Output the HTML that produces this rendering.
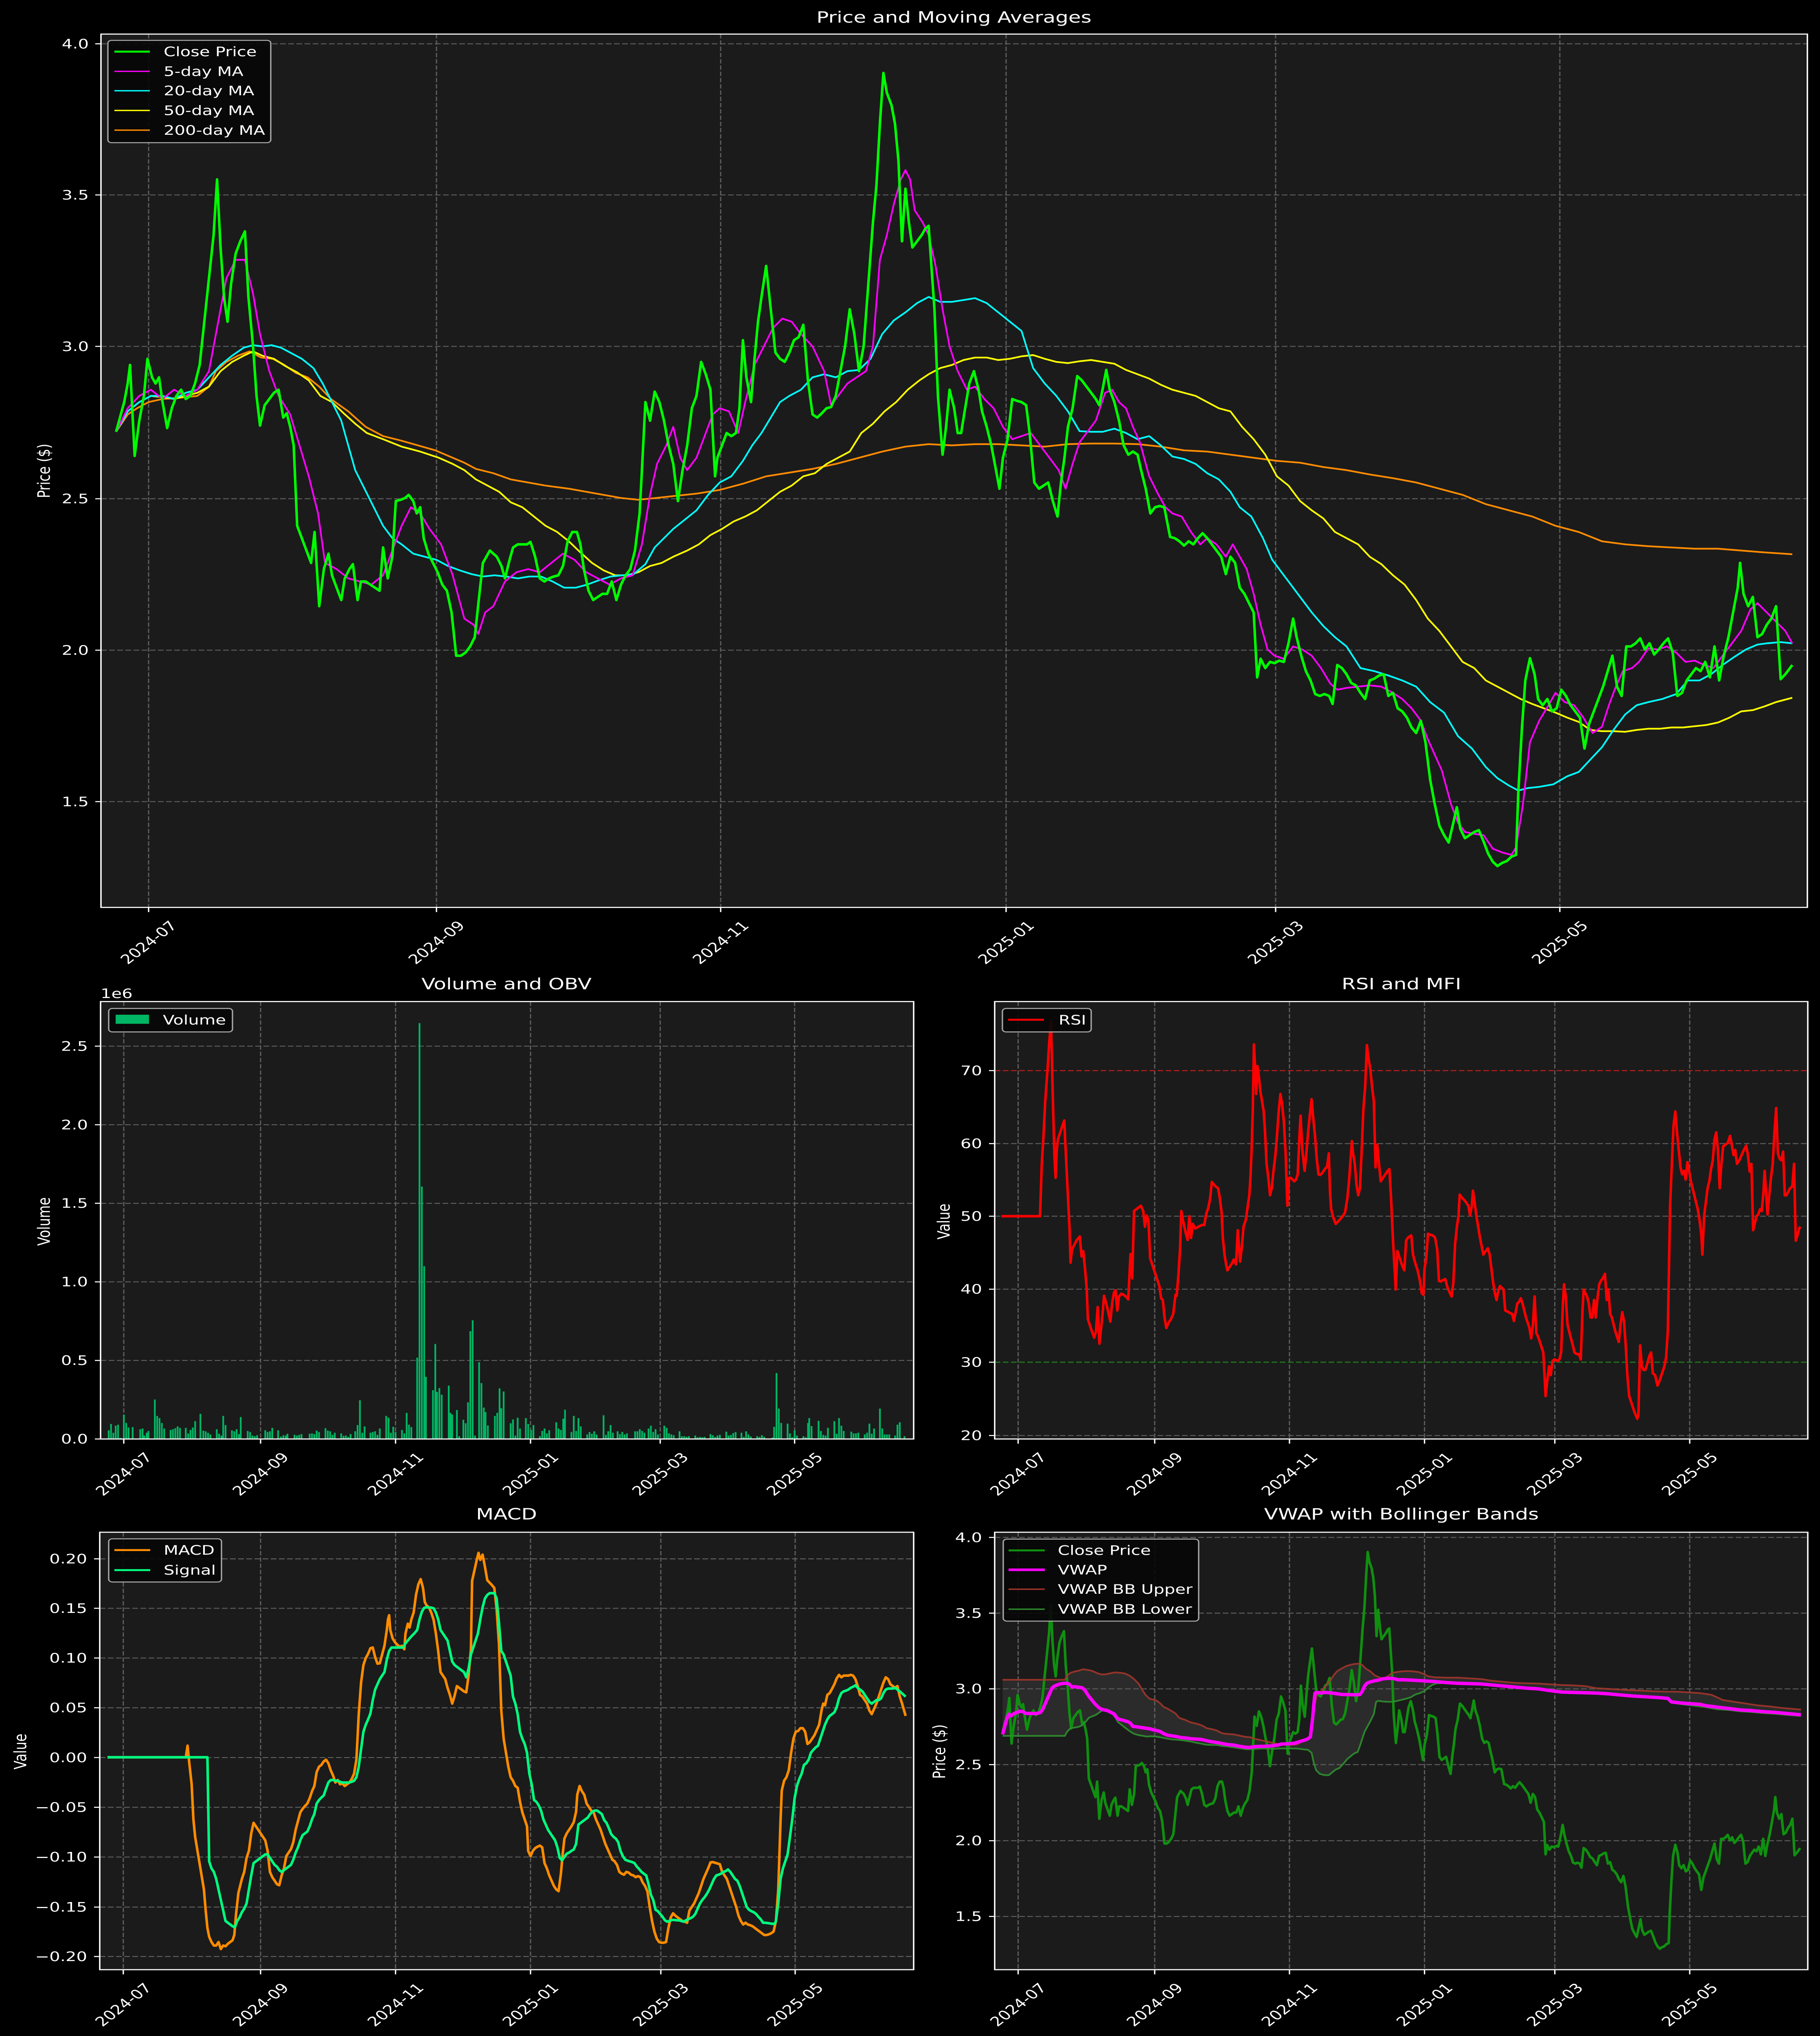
<!DOCTYPE html>
<html><head><meta charset="utf-8"><style>
html,body{margin:0;padding:0;background:#000;width:100%;height:100%;overflow:hidden}
svg{display:block;position:absolute;left:0;top:0;width:100vw;height:100vh}
.ns{vector-effect:non-scaling-stroke;fill:none;stroke-linejoin:round}
text{font-family:"DejaVu Sans","Liberation Sans",sans-serif;fill:#fff}
.t{font-size:41.7px}
.ti{font-size:50px;text-anchor:middle}
.yl{text-anchor:end;dominant-baseline:central}
.xl{text-anchor:middle;dominant-baseline:central}
.g{stroke:#5e5e5e;stroke-width:3;stroke-dasharray:14 6;fill:none}
.tk{stroke:#fff;stroke-width:3.3}
.sp{fill:none;stroke:#fff;stroke-width:3.5}
.lg{fill:#070707;fill-opacity:.9;stroke:#a8a8a8;stroke-width:3.3}
</style></head><body>
<svg xmlns="http://www.w3.org/2000/svg" xmlns:xlink="http://www.w3.org/1999/xlink" viewBox="0 0 4470 6507" preserveAspectRatio="none" overflow="hidden">
<defs>
<clipPath id="c1"><rect x="248" y="109" width="4191" height="2791"/></clipPath>
<clipPath id="c2"><rect x="247" y="3201" width="1997" height="1398"/></clipPath>
<clipPath id="c3"><rect x="2443" y="3201" width="1997" height="1398"/></clipPath>
<clipPath id="c4"><rect x="245" y="4897" width="1999" height="1398"/></clipPath>
<clipPath id="c5"><rect x="2443" y="4897" width="1997" height="1398"/></clipPath>
<polyline id="cp" class="ns" points="100,698 107,650 110,620 112,590 116,737 120,680 124,640 127,580 131,610 134,620 137,610 140,650 144,692 148,660 152,640 156,630 160,645 164,640 168,620 172,590 176,520 180,450 184,380 187,290 190,400 193,480 196,520 199,460 203,410 207,390 211,374 214,480 218,560 221,640 224,688 228,655 232,645 236,635 240,630 244,675 247,668 250,690 253,720 256,850 260,870 264,890 268,910 271,860 275,980 279,920 283,895 286,930 290,950 294,970 297,935 301,920 304,912 308,970 311,940 315,940 319,945 323,950 327,955 330,885 334,935 338,900 341,810 345,808 349,805 352,800 356,810 359,830 362,820 365,870 369,895 373,910 377,925 381,945 385,955 389,990 393,1060 397,1060 401,1055 405,1045 409,1030 413,960 416,910 419,900 422,890 425,895 428,900 432,915 435,935 439,905 442,885 446,880 450,880 454,880 457,876 461,900 465,935 469,940 473,935 477,932 481,930 485,915 489,875 493,860 497,860 500,880 503,920 507,955 511,970 515,965 519,960 523,960 527,940 531,970 535,945 539,930 543,920 547,890 551,830 553,760 556,650 560,680 564,633 568,650 572,680 576,720 580,750 584,810 588,760 592,720 596,660 600,640 604,585 608,605 612,630 614,700 616,770 618,740 622,720 626,700 630,705 634,700 637,660 640,550 643,610 647,650 650,580 653,520 656,480 660,430 664,500 668,570 672,580 676,585 680,570 684,550 688,545 692,525 696,615 700,670 704,675 708,668 712,660 716,658 720,640 724,600 728,560 732,500 736,540 740,600 744,560 748,460 752,360 755,300 758,200 761,118 764,150 768,170 771,200 774,260 777,390 780,305 783,360 786,400 790,390 794,380 797,370 800,365 802,420 805,500 808,640 812,735 815,690 818,630 822,660 825,700 828,700 831,665 835,620 839,600 843,630 846,665 850,690 854,720 858,760 861,790 864,740 868,710 872,645 876,648 880,650 884,655 887,700 891,780 895,790 899,785 903,780 907,810 911,835 914,780 917,740 920,690 924,660 928,608 932,615 936,625 940,635 944,645 947,655 950,628 953,598 956,630 960,650 964,680 968,720 972,735 976,730 980,735 983,760 987,790 991,830 995,820 999,818 1003,820 1008,868 1012,870 1016,875 1020,882 1024,875 1028,880 1032,870 1036,862 1040,870 1044,880 1048,890 1052,900 1056,928 1060,900 1064,910 1068,950 1072,960 1076,975 1080,990 1083,1095 1086,1065 1090,1080 1094,1070 1098,1072 1102,1068 1106,1070 1110,1040 1114,1000 1117,1030 1121,1060 1125,1085 1129,1100 1133,1122 1137,1125 1141,1122 1145,1125 1148,1138 1152,1075 1156,1080 1160,1090 1164,1104 1168,1108 1172,1120 1176,1130 1180,1100 1184,1097 1188,1092 1192,1090 1196,1125 1200,1120 1204,1145 1208,1150 1212,1160 1216,1176 1220,1185 1224,1165 1228,1200 1232,1260 1236,1300 1240,1335 1244,1350 1248,1362 1252,1330 1255,1305 1258,1340 1262,1355 1266,1350 1270,1345 1274,1342 1278,1360 1282,1380 1286,1393 1290,1400 1294,1395 1298,1392 1302,1385 1306,1382 1308,1280 1311,1180 1314,1100 1318,1064 1322,1090 1325,1130 1329,1140 1333,1130 1337,1150 1341,1145 1345,1115 1349,1125 1353,1140 1357,1150 1361,1160 1365,1210 1369,1170 1373,1150 1377,1130 1381,1110 1385,1085 1389,1060 1393,1110 1397,1125 1401,1045 1405,1045 1409,1040 1413,1032 1417,1050 1421,1040 1425,1058 1429,1050 1433,1040 1437,1032 1441,1055 1445,1125 1449,1120 1453,1100 1457,1090 1461,1080 1465,1085 1469,1070 1473,1095 1477,1045 1481,1100 1485,1060 1489,1030 1493,990 1497,950 1499,910 1502,960 1506,980 1510,965 1514,1030 1518,1025 1522,1010 1526,1000 1530,980 1534,1098 1538,1090 1544,1075"/>
</defs>
<rect width="4470" height="6507" fill="#000"/>

<!-- ================= TOP PANEL ================= -->
<rect x="248" y="109" width="4191" height="2791" fill="#1b1b1b"/>
<g class="g">
<path d="M365 109V2900M1072 109V2900M1770 109V2900M2471 109V2900M3133 109V2900M3831 109V2900"/>
<path d="M248 140H4439M248 623H4439M248 1107H4439M248 1594H4439M248 2078H4439M248 2562H4439"/>
</g>
<g clip-path="url(#c1)">
<g transform="scale(2.851,1.977)">
<polyline class="ns" stroke="#ff8c00" stroke-width="4.2" points="100,698 110,670 118,660 128,650 140,645 155,643 170,640 180,625 186,600 195,585 205,575 215,568 225,578 235,580 245,590 255,603 265,610 275,625 285,645 300,665 315,690 330,705 345,712 360,720 375,728 390,740 400,748 410,758 425,765 440,775 455,780 470,785 490,790 505,795 520,800 535,805 550,808 565,805 580,802 600,798 620,792 640,782 660,770 680,764 700,758 720,750 740,740 760,730 780,722 800,718 820,720 840,718 860,718 880,720 900,722 920,718 940,717 960,717 980,718 1000,722 1020,728 1040,730 1060,735 1080,740 1100,745 1120,748 1140,755 1160,760 1180,767 1200,773 1220,780 1240,790 1260,800 1280,815 1300,825 1320,835 1340,850 1360,860 1380,875 1400,880 1420,883 1440,885 1460,887 1480,887 1500,890 1520,893 1544,896"/>
<polyline class="ns" stroke="#ffff00" stroke-width="4.2" points="100,698 110,665 120,650 130,640 140,642 150,645 160,640 170,635 180,625 190,600 200,585 210,575 218,568 226,575 236,580 246,592 256,602 266,615 276,640 286,650 296,668 306,685 316,700 330,710 346,722 362,730 378,740 390,750 400,760 410,775 420,785 430,795 440,812 450,820 460,835 470,850 480,860 490,875 500,893 510,910 520,922 530,930 540,930 550,925 560,915 570,910 580,900 592,890 602,880 612,865 622,855 632,843 642,835 652,825 662,810 672,795 682,785 692,770 702,765 712,750 722,740 732,730 742,700 752,685 762,665 772,650 782,630 792,615 800,605 810,595 820,590 830,582 840,578 850,578 860,582 870,580 880,576 890,574 900,580 910,585 920,587 930,584 940,582 950,585 960,588 970,598 980,605 990,612 1000,622 1010,630 1020,635 1030,640 1040,650 1050,660 1060,665 1070,690 1080,710 1090,735 1100,770 1110,785 1120,810 1130,825 1140,838 1150,860 1160,870 1170,880 1180,900 1190,912 1200,930 1210,945 1220,970 1230,1000 1240,1020 1250,1045 1260,1070 1270,1080 1280,1100 1290,1110 1300,1120 1310,1130 1320,1138 1330,1145 1340,1152 1350,1160 1360,1167 1370,1180 1380,1182 1390,1182 1400,1183 1410,1180 1420,1178 1430,1178 1440,1176 1450,1176 1460,1174 1470,1172 1480,1168 1490,1160 1500,1150 1510,1148 1520,1142 1530,1135 1544,1128"/>
<polyline class="ns" stroke="#00ffff" stroke-width="4.2" points="100,698 110,665 120,650 130,640 140,640 150,645 160,635 170,630 180,610 190,590 200,575 210,562 218,558 226,560 234,558 242,562 250,570 260,580 270,595 278,620 286,650 294,680 300,720 306,760 314,790 322,820 330,850 338,870 346,880 356,895 366,900 376,905 386,915 396,922 406,928 416,932 426,930 436,932 446,935 456,932 466,932 476,940 486,950 496,950 506,945 516,938 526,932 536,930 546,928 556,912 564,885 572,870 580,855 590,840 600,825 610,800 620,780 630,770 640,745 648,720 656,700 664,675 672,650 680,640 690,630 700,610 710,605 720,610 730,600 740,598 750,580 760,540 770,518 780,505 790,490 800,480 810,488 820,488 830,485 840,482 850,490 860,505 870,520 880,535 890,595 900,620 910,640 920,665 930,697 940,698 950,698 960,693 970,700 980,710 990,705 1000,720 1010,738 1020,742 1030,750 1040,765 1050,775 1060,795 1068,820 1078,835 1088,870 1096,905 1104,925 1114,950 1122,970 1130,990 1140,1012 1150,1030 1160,1045 1172,1080 1184,1085 1196,1092 1208,1100 1220,1110 1232,1135 1244,1152 1256,1190 1268,1210 1280,1240 1290,1258 1300,1270 1308,1278 1316,1274 1326,1272 1338,1268 1350,1255 1360,1248 1370,1228 1380,1208 1390,1180 1400,1155 1410,1140 1420,1135 1432,1130 1444,1122 1454,1100 1464,1100 1474,1090 1484,1075 1494,1062 1504,1050 1514,1042 1522,1040 1534,1038 1544,1040"/>
<polyline class="ns" stroke="#ff00ff" stroke-width="4.2" points="100,698 110,660 120,640 130,630 140,645 150,630 160,640 170,630 180,600 188,520 195,450 203,420 211,420 218,475 224,540 232,600 240,640 250,670 258,720 266,770 274,830 280,910 290,920 300,935 310,940 320,945 330,930 338,890 346,850 354,820 362,830 370,855 380,880 390,930 400,1000 408,1010 412,1025 418,990 425,980 435,940 445,925 455,920 465,925 475,910 485,895 495,905 505,925 515,935 525,945 535,935 545,930 553,880 560,800 566,750 574,720 580,690 586,740 592,760 600,740 608,700 614,670 620,660 628,665 636,700 642,650 650,590 658,560 666,530 674,515 682,520 690,540 700,560 710,600 716,655 722,640 730,620 738,610 746,600 752,560 758,420 764,380 770,330 776,290 780,275 784,290 788,340 795,360 800,380 806,430 812,500 818,560 825,600 833,630 840,625 848,645 856,660 864,690 872,710 880,705 888,700 896,720 904,740 912,760 918,790 924,750 930,715 936,700 944,680 952,635 958,630 964,650 970,660 976,690 982,715 990,770 998,800 1004,820 1010,830 1018,835 1026,860 1034,880 1040,870 1048,880 1056,900 1062,880 1068,900 1074,920 1080,960 1086,1010 1092,1050 1098,1060 1106,1065 1114,1045 1122,1050 1130,1060 1138,1080 1146,1105 1152,1115 1160,1112 1170,1110 1180,1108 1190,1110 1200,1120 1208,1130 1216,1145 1224,1165 1230,1195 1236,1220 1242,1245 1250,1300 1256,1330 1262,1345 1270,1348 1278,1350 1286,1372 1294,1378 1302,1382 1306,1370 1312,1300 1318,1200 1326,1165 1334,1140 1340,1120 1348,1135 1356,1140 1364,1160 1372,1185 1380,1175 1386,1140 1392,1110 1398,1085 1406,1080 1412,1070 1420,1048 1428,1050 1436,1045 1444,1055 1452,1070 1460,1068 1468,1075 1476,1080 1484,1060 1492,1040 1500,1020 1508,985 1514,975 1522,990 1530,1005 1538,1020 1544,1040"/>
</g>
<use xlink:href="#cp" href="#cp" transform="scale(2.851,1.977)" stroke="#00ff00" stroke-width="6.25"/>
</g>
<rect class="sp" x="248" y="109" width="4191" height="2791"/>
<path class="tk" d="M234 140H248M234 623H248M234 1107H248M234 1594H248M234 2078H248M234 2562H248M365 2900v15M1072 2900v15M1770 2900v15M2471 2900v15M3133 2900v15M3831 2900v15"/>
<g class="t yl"><text x="218" y="140">4.0</text><text x="218" y="623">3.5</text><text x="218" y="1107">3.0</text><text x="218" y="1594">2.5</text><text x="218" y="2078">2.0</text><text x="218" y="2562">1.5</text></g>
<g class="t xl">
<text transform="translate(365,3012) rotate(-45)">2024-07</text>
<text transform="translate(1072,3012) rotate(-45)">2024-09</text>
<text transform="translate(1770,3012) rotate(-45)">2024-11</text>
<text transform="translate(2471,3012) rotate(-45)">2025-01</text>
<text transform="translate(3133,3012) rotate(-45)">2025-03</text>
<text transform="translate(3831,3012) rotate(-45)">2025-05</text>
</g>
<text class="t" text-anchor="middle" dominant-baseline="central" transform="translate(108,1505) rotate(-90)">Price ($)</text>
<text class="ti" x="2343" y="72">Price and Moving Averages</text>
<rect class="lg" x="265" y="129" width="400" height="327" rx="9"/>
<path d="M281 165H368" stroke="#00ff00" stroke-width="6.25"/>
<path d="M281 228H368" stroke="#ff00ff" stroke-width="4.2"/>
<path d="M281 290H368" stroke="#00ffff" stroke-width="4.2"/>
<path d="M281 353H368" stroke="#ffff00" stroke-width="4.2"/>
<path d="M281 416H368" stroke="#ff8c00" stroke-width="4.2"/>
<g class="t" dominant-baseline="central"><text x="402" y="165">Close Price</text><text x="402" y="228">5-day MA</text><text x="402" y="290">20-day MA</text><text x="402" y="353">50-day MA</text><text x="402" y="416">200-day MA</text></g>

<!-- ================= VOLUME ================= -->
<rect x="247" y="3201" width="1997" height="1398" fill="#1b1b1b"/>
<g class="g">
<path d="M304 3201V4599M640 3201V4599M971.5 3201V4599M1303 3201V4599M1621.5 3201V4599M1951.6 3201V4599"/>
<path d="M247 3343.5H2244M247 3594.6H2244M247 3845.7H2244M247 4096.8H2244M247 4348H2244"/>
</g>
<g clip-path="url(#c2)"><g transform="translate(0,3050) scale(1.435,1.116)">
<path stroke="#00b563" stroke-width="3" fill="none" d="M186 1388V1363M190 1388V1345M194 1388V1370M198 1388V1350M202 1388V1347M206 1388V1385M212 1388V1318M216 1388V1342M220 1388V1355M227 1388V1354M240 1388V1360M244 1388V1358M247 1388V1378M251 1388V1370M254 1388V1365M265 1388V1275M269 1388V1322M273 1388V1328M277 1388V1342M281 1388V1358M292 1388V1362M296 1388V1360M300 1388V1357M304 1388V1352M308 1388V1356M318 1388V1356M322 1388V1372M326 1388V1362M330 1388V1355M334 1388V1337M343 1388V1316M348 1388V1364M352 1388V1366M356 1388V1370M360 1388V1375M371 1388V1360M375 1388V1373M379 1388V1378M382 1388V1322M386 1388V1348M397 1388V1363M401 1388V1366M405 1388V1360M409 1388V1374M412 1388V1325M424 1388V1365M428 1388V1368M432 1388V1378M436 1388V1380M440 1388V1377M454 1388V1363M458 1388V1368M462 1388V1366M466 1388V1356M476 1388V1363M481 1388V1381M485 1388V1377M489 1388V1378M492 1388V1373M504 1388V1376M508 1388V1378M512 1388V1376M516 1388V1374M530 1388V1373M534 1388V1372M538 1388V1374M542 1388V1364M546 1388V1368M557 1388V1357M561 1388V1364M565 1388V1366M569 1388V1376M573 1388V1370M584 1388V1372M588 1388V1379M592 1388V1378M596 1388V1382M600 1388V1374M608 1388V1366M612 1388V1348M616 1388V1277M620 1388V1370M624 1388V1352M634 1388V1370M638 1388V1368M642 1388V1366M646 1388V1376M650 1388V1358M661 1388V1322M665 1388V1327M669 1388V1370M673 1388V1353M677 1388V1368M688 1388V1362M692 1388V1372M696 1388V1313M700 1388V1347M704 1388V1354M714 1388V1155M718 1388V197M722 1388V665M726 1388V893M729 1388V1210M741 1388V1248M745 1388V1116M748 1388V1253M752 1388V1242M756 1388V1261M768 1388V1235M771 1388V1313M774 1388V1318M782 1388V1305M786 1388V1380M793 1388V1333M797 1388V1343M801 1388V1283M805 1388V1079M809 1388V1048M813 1388V1378M820 1388V1168M824 1388V1228M828 1388V1298M831 1388V1311M835 1388V1349M847 1388V1322M851 1388V1313M855 1388V1243M858 1388V1300M862 1388V1252M874 1388V1343M878 1388V1332M882 1388V1378M886 1388V1327M890 1388V1358M900 1388V1328M904 1388V1345M909 1388V1362M913 1388V1348M924 1388V1380M928 1388V1365M932 1388V1358M936 1388V1372M940 1388V1363M952 1388V1340M956 1388V1358M960 1388V1362M964 1388V1330M967 1388V1304M978 1388V1368M982 1388V1322M986 1388V1365M990 1388V1328M994 1388V1352M1005 1388V1375M1009 1388V1368M1013 1388V1373M1017 1388V1366M1021 1388V1375M1033 1388V1320M1037 1388V1376M1041 1388V1366M1045 1388V1348M1049 1388V1370M1057 1388V1366M1061 1388V1374M1065 1388V1368M1069 1388V1375M1073 1388V1372M1087 1388V1366M1091 1388V1366M1095 1388V1360M1099 1388V1365M1103 1388V1370M1110 1388V1358M1114 1388V1350M1118 1388V1368M1122 1388V1360M1126 1388V1375M1137 1388V1350M1141 1388V1356M1145 1388V1372M1149 1388V1375M1153 1388V1377M1163 1388V1366M1167 1388V1380M1171 1388V1380M1175 1388V1382M1179 1388V1380M1190 1388V1378M1194 1388V1383M1198 1388V1382M1202 1388V1383M1206 1388V1382M1216 1388V1374M1220 1388V1377M1224 1388V1382M1228 1388V1378M1232 1388V1376M1243 1388V1367M1247 1388V1378M1251 1388V1376M1255 1388V1371M1259 1388V1368M1269 1388V1370M1273 1388V1382M1277 1388V1366M1281 1388V1375M1285 1388V1381M1296 1388V1380M1300 1388V1382M1304 1388V1377M1308 1388V1382M1322 1388V1384M1325 1388V1353M1329 1388V1199M1333 1388V1301M1337 1388V1342M1348 1388V1344M1352 1388V1372M1356 1388V1383M1360 1388V1363M1364 1388V1378M1375 1388V1380M1379 1388V1383M1383 1388V1342M1385 1388V1328M1389 1388V1351M1401 1388V1336M1405 1388V1365M1409 1388V1376M1413 1388V1378M1417 1388V1356M1428 1388V1337M1432 1388V1373M1436 1388V1328M1440 1388V1350M1444 1388V1365M1457 1388V1367M1461 1388V1372M1465 1388V1372M1469 1388V1370M1480 1388V1375M1484 1388V1370M1488 1388V1344M1492 1388V1373M1496 1388V1358M1506 1388V1301M1510 1388V1358M1514 1388V1375M1518 1388V1375M1522 1388V1375M1532 1388V1378M1536 1388V1347M1540 1388V1340M1548 1388V1380"/>
</g></g>
<rect class="sp" x="247" y="3201" width="1997" height="1398"/>
<path class="tk" d="M233 3343.5H247M233 3594.6H247M233 3845.7H247M233 4096.8H247M233 4348H247M233 4599H247M304 4599v15M640 4599v15M971.5 4599v15M1303 4599v15M1621.5 4599v15M1951.6 4599v15"/>
<g class="t yl"><text x="216" y="3343.5">2.5</text><text x="216" y="3594.6">2.0</text><text x="216" y="3845.7">1.5</text><text x="216" y="4096.8">1.0</text><text x="216" y="4348">0.5</text><text x="216" y="4599">0.0</text></g>
<g class="t xl">
<text transform="translate(304,4711) rotate(-45)">2024-07</text>
<text transform="translate(640,4711) rotate(-45)">2024-09</text>
<text transform="translate(971.5,4711) rotate(-45)">2024-11</text>
<text transform="translate(1303,4711) rotate(-45)">2025-01</text>
<text transform="translate(1621.5,4711) rotate(-45)">2025-03</text>
<text transform="translate(1951.6,4711) rotate(-45)">2025-05</text>
</g>
<text class="t" x="247" y="3190">1e6</text>
<text class="t" text-anchor="middle" dominant-baseline="central" transform="translate(108,3904) rotate(-90)">Volume</text>
<text class="ti" x="1244" y="3162">Volume and OBV</text>
<rect class="lg" x="267" y="3223" width="304" height="75" rx="9"/>
<rect x="284" y="3243" width="82" height="29" fill="#00b563"/>
<text class="t" x="400" y="3260" dominant-baseline="central">Volume</text>

<!-- ================= RSI ================= -->
<rect x="2443" y="3201" width="1997" height="1398" fill="#1b1b1b"/>
<g class="g">
<path d="M2500.6 3201V4599M2836 3201V4599M3167 3201V4599M3498.7 3201V4599M3818.7 3201V4599M4150 3201V4599"/>
<path d="M2443 3421.6H4440M2443 3654.9H4440M2443 3887H4440M2443 4120.2H4440M2443 4353.5H4440M2443 4587.8H4440"/>
</g>
<path d="M2443 3421.6H4440" stroke="#b01e1e" stroke-width="3.5" stroke-dasharray="14 6"/>
<path d="M2443 4353.5H4440" stroke="#1e7a1e" stroke-width="3.5" stroke-dasharray="14 6"/>
<g clip-path="url(#c3)"><g transform="translate(2250,3050) scale(1.4158,1.116)">
<polyline class="ns" stroke="#ff0000" stroke-width="6.25" points="148,750 215,750 218,600 221,520 224,420 228,330 231,250 234,192 237,400 240,580 242,640 244,560 246,530 250,510 254,490 257,476 260,580 263,680 266,780 268,883 270,850 272,840 278,820 284,808 287,865 290,850 293,900 296,960 298,1045 302,1065 305,1080 309,1098 312,1080 315,1010 318,1115 321,1070 324,1020 326,978 330,1000 334,1030 337,1052 340,1000 343,970 346,962 349,1020 352,980 356,972 360,975 364,980 368,988 372,858 375,928 378,735 382,730 386,725 390,720 394,735 397,780 400,748 403,760 406,870 410,890 414,910 418,930 422,950 425,985 428,990 431,1040 434,1070 438,1055 442,1045 446,1030 450,975 452,978 455,920 458,840 460,735 464,770 468,800 471,818 474,750 477,812 480,772 484,785 488,782 492,778 496,775 500,775 503,745 507,725 510,700 513,652 517,660 520,665 524,670 527,700 530,740 532,810 535,860 538,890 540,905 544,895 548,885 551,874 555,888 558,790 562,880 565,840 568,780 572,760 575,725 578,690 580,640 582,560 584,450 586,258 588,320 590,400 592,320 594,340 597,390 600,420 603,450 605,500 608,600 611,640 614,690 617,670 620,620 623,580 626,520 629,450 632,400 635,430 638,480 641,570 644,720 647,640 650,640 653,645 656,650 659,645 662,630 665,520 667,462 670,560 674,620 677,570 680,510 683,460 686,415 689,470 692,520 695,585 698,630 701,632 705,625 709,615 713,608 716,570 718,680 720,730 724,755 728,772 732,765 736,758 740,750 744,740 748,700 751,650 754,580 756,535 758,570 761,600 764,660 767,690 770,670 773,560 776,440 779,380 782,260 785,300 788,330 791,380 794,420 797,610 800,545 803,600 806,650 810,640 814,630 818,620 821,615 824,700 827,810 830,900 832,960 835,850 838,865 841,880 844,895 847,905 850,820 853,812 856,808 859,805 862,860 866,885 870,905 874,935 877,970 880,975 882,900 885,870 888,800 892,803 896,805 900,810 904,845 907,935 910,937 914,933 918,930 922,955 926,970 929,980 932,940 935,830 938,782 941,748 943,688 946,695 950,702 954,710 958,720 961,748 964,720 966,677 969,710 972,750 975,780 978,810 981,835 984,860 988,850 992,842 995,860 998,900 1001,940 1004,970 1007,990 1010,962 1013,950 1016,955 1019,960 1022,1020 1026,1023 1030,1027 1034,1030 1037,1050 1040,1025 1043,1000 1046,995 1049,985 1052,1000 1055,1020 1058,1040 1061,1055 1064,1070 1067,1100 1070,1060 1073,980 1076,1085 1079,1095 1082,1110 1085,1125 1088,1140 1090,1200 1092,1265 1095,1220 1098,1180 1101,1205 1104,1165 1107,1160 1110,1162 1113,1165 1116,1160 1119,1140 1122,1000 1124,945 1127,980 1130,1060 1133,1080 1136,1100 1139,1118 1142,1140 1146,1145 1150,1145 1153,1160 1156,1020 1158,960 1161,970 1164,980 1167,1000 1170,1040 1173,1040 1176,990 1179,1040 1182,985 1185,945 1188,935 1192,925 1195,915 1198,990 1201,960 1204,1030 1207,1040 1210,1060 1213,1080 1216,1095 1219,1110 1222,1060 1225,1025 1228,1050 1231,1120 1234,1210 1237,1265 1240,1280 1243,1295 1246,1310 1249,1322 1251,1330 1253,1320 1256,1120 1259,1180 1262,1190 1265,1190 1268,1175 1272,1150 1275,1140 1278,1200 1282,1205 1286,1235 1290,1220 1294,1200 1298,1180 1301,1155 1304,1080 1306,900 1308,720 1311,600 1314,490 1317,450 1320,510 1323,560 1326,610 1329,630 1332,620 1335,645 1338,595 1341,620 1344,650 1347,670 1350,690 1353,710 1356,730 1359,760 1362,800 1364,860 1367,750 1370,710 1373,670 1376,650 1379,615 1382,590 1385,530 1388,510 1391,560 1394,670 1397,600 1400,550 1404,545 1408,540 1412,520 1415,545 1418,575 1421,560 1424,600 1428,590 1432,575 1436,560 1440,548 1443,575 1446,622 1449,600 1452,790 1455,770 1458,750 1461,745 1464,730 1467,735 1470,680 1472,620 1474,670 1477,745 1480,690 1483,640 1486,600 1489,510 1492,440 1495,570 1498,585 1501,590 1504,565 1507,690 1510,690 1513,680 1516,670 1520,665 1523,600 1526,820 1529,805 1532,785 1534,780"/>
</g></g>
<rect class="sp" x="2443" y="3201" width="1997" height="1398"/>
<path class="tk" d="M2429 3421.6H2443M2429 3654.9H2443M2429 3887H2443M2429 4120.2H2443M2429 4353.5H2443M2429 4587.8H2443M2500.6 4599v15M2836 4599v15M3167 4599v15M3498.7 4599v15M3818.7 4599v15M4150 4599v15"/>
<g class="t yl"><text x="2412" y="3421.6">70</text><text x="2412" y="3654.9">60</text><text x="2412" y="3887">50</text><text x="2412" y="4120.2">40</text><text x="2412" y="4353.5">30</text><text x="2412" y="4587.8">20</text></g>
<g class="t xl">
<text transform="translate(2500.6,4711) rotate(-45)">2024-07</text>
<text transform="translate(2836,4711) rotate(-45)">2024-09</text>
<text transform="translate(3167,4711) rotate(-45)">2024-11</text>
<text transform="translate(3498.7,4711) rotate(-45)">2025-01</text>
<text transform="translate(3818.7,4711) rotate(-45)">2025-03</text>
<text transform="translate(4150,4711) rotate(-45)">2025-05</text>
</g>
<text class="t" text-anchor="middle" dominant-baseline="central" transform="translate(2318,3904) rotate(-90)">Value</text>
<text class="ti" x="3442" y="3162">RSI and MFI</text>
<rect class="lg" x="2462" y="3223" width="218" height="75" rx="9"/>
<path d="M2476 3259H2564" stroke="#ff0000" stroke-width="6.25"/>
<text class="t" x="2600" y="3260" dominant-baseline="central">RSI</text>

<!-- ================= MACD ================= -->
<rect x="245" y="4897" width="1999" height="1398" fill="#1b1b1b"/>
<g class="g">
<path d="M302.8 4897V6295M640 4897V6295M971.5 4897V6295M1303 4897V6295M1623 4897V6295M1953 4897V6295"/>
<path d="M245 4982H2244M245 5140H2244M245 5299H2244M245 5458H2244M245 5617H2244M245 5776H2244M245 5935H2244M245 6095H2244M245 6253H2244"/>
</g>
<g clip-path="url(#c4)"><g transform="translate(0,4750) scale(1.435,1.1205)">
<polyline class="ns" stroke="#ff8c00" stroke-width="6.25" points="184,773 318,773 321,740 324,790 328,850 331,950 334,1000 338,1040 342,1080 346,1120 349,1150 352,1210 355,1260 358,1285 362,1300 366,1310 370,1310 374,1300 378,1320 382,1310 386,1312 390,1305 394,1300 398,1295 401,1280 404,1220 408,1160 411,1140 414,1120 418,1100 422,1060 426,1040 430,990 434,960 438,970 442,980 446,990 450,1000 454,1010 458,1040 462,1100 466,1115 470,1125 474,1135 478,1138 482,1110 486,1090 490,1055 494,1045 498,1035 502,1015 506,980 510,955 514,930 518,920 522,912 526,905 530,890 534,870 538,855 542,815 546,800 550,795 554,785 558,780 562,790 566,810 570,825 574,845 578,838 582,850 586,848 590,855 594,850 598,845 602,835 606,820 610,780 614,650 618,560 622,510 626,490 630,478 634,462 638,460 642,487 646,506 650,505 654,480 658,455 662,410 664,380 666,368 668,410 672,434 676,445 680,452 684,458 688,455 692,465 694,420 698,392 701,403 704,380 708,360 712,310 716,280 720,265 724,290 727,330 730,340 734,345 738,360 742,380 746,420 750,470 754,530 758,540 762,550 766,575 770,595 774,620 778,598 782,570 786,575 790,580 794,585 798,588 802,540 806,465 808,270 812,240 816,210 819,190 822,210 826,195 830,230 834,268 838,275 842,282 846,290 850,350 854,450 858,640 862,720 866,760 870,800 874,830 878,840 882,855 886,860 890,900 894,930 898,950 902,970 904,1040 908,1055 912,1040 916,1032 920,1028 924,1025 928,1030 932,1075 936,1090 940,1110 944,1125 948,1140 952,1150 956,1155 960,1105 963,1050 966,1005 970,990 974,980 978,970 982,958 986,928 988,880 992,855 996,870 1000,880 1004,905 1008,915 1012,925 1016,930 1020,950 1024,965 1028,980 1032,1000 1036,1020 1040,1035 1044,1050 1048,1065 1052,1070 1056,1080 1060,1100 1064,1105 1068,1108 1072,1100 1076,1102 1080,1108 1084,1110 1088,1115 1092,1112 1096,1115 1100,1130 1104,1140 1108,1155 1112,1200 1116,1240 1120,1270 1124,1290 1128,1300 1132,1302 1136,1302 1140,1300 1144,1260 1148,1230 1152,1218 1156,1225 1160,1230 1164,1235 1168,1240 1172,1242 1176,1245 1180,1210 1184,1200 1188,1190 1192,1175 1196,1160 1200,1140 1204,1120 1208,1105 1212,1090 1216,1073 1220,1072 1224,1074 1228,1076 1232,1078 1236,1100 1240,1110 1244,1120 1248,1140 1252,1160 1256,1180 1260,1200 1264,1225 1268,1240 1272,1250 1276,1245 1280,1250 1284,1252 1288,1255 1292,1260 1296,1265 1300,1270 1304,1275 1308,1280 1312,1280 1316,1278 1320,1275 1324,1270 1328,1240 1332,1150 1334,1050 1336,950 1338,868 1342,840 1346,830 1350,810 1354,760 1358,720 1362,700 1366,698 1370,690 1374,690 1378,700 1382,735 1386,730 1390,720 1394,710 1398,695 1402,680 1406,640 1409,620 1412,625 1416,595 1420,590 1424,578 1428,565 1432,548 1436,538 1440,545 1444,540 1448,540 1452,540 1456,538 1460,540 1464,550 1468,570 1472,595 1476,600 1480,610 1484,620 1488,640 1492,650 1496,635 1500,620 1504,600 1508,580 1512,560 1516,545 1520,550 1524,565 1528,570 1532,575 1536,570 1540,600 1544,620 1550,655"/>
<polyline class="ns" stroke="#00ff7f" stroke-width="6.25" points="184,773 355,773 358,1070 362,1090 366,1100 370,1120 374,1150 378,1180 382,1210 386,1240 390,1245 394,1250 398,1255 402,1258 406,1240 410,1230 414,1215 418,1205 422,1190 426,1150 430,1110 434,1075 438,1070 442,1065 446,1060 450,1055 454,1050 458,1050 462,1060 466,1070 470,1080 474,1085 478,1095 482,1100 486,1095 490,1090 494,1085 498,1080 502,1065 506,1045 510,1030 514,1010 518,995 522,990 526,985 530,970 534,950 538,935 542,905 546,895 550,888 554,882 558,863 562,845 566,838 570,838 574,840 578,840 582,843 586,845 590,845 594,845 598,845 602,843 606,840 610,830 614,800 618,750 622,700 626,680 630,665 634,648 638,610 642,580 646,565 650,550 654,540 658,530 662,495 666,470 670,460 674,460 678,460 682,460 686,460 690,460 694,448 698,440 702,432 706,425 710,418 714,410 718,380 722,358 726,347 730,345 734,346 738,346 742,348 746,360 750,380 754,410 758,420 762,430 766,440 770,470 774,500 778,510 782,515 786,520 790,525 794,530 798,545 802,520 806,480 810,460 814,440 818,420 822,380 826,345 830,320 834,310 838,305 842,305 846,305 850,320 854,390 858,470 862,480 866,500 870,520 874,540 878,600 882,620 886,650 890,700 894,720 898,735 902,760 906,820 910,850 914,895 918,900 922,910 926,925 930,950 934,965 938,980 942,990 946,1000 950,1010 954,1030 958,1060 962,1067 966,1057 970,1048 974,1045 978,1040 982,1036 986,1020 990,965 994,960 998,955 1002,950 1006,945 1010,935 1014,928 1018,925 1022,925 1026,930 1030,935 1034,952 1038,960 1042,975 1046,992 1050,1000 1054,1005 1058,1015 1062,1040 1066,1055 1070,1065 1074,1068 1078,1070 1082,1072 1086,1075 1090,1085 1094,1092 1098,1100 1102,1105 1106,1110 1110,1135 1114,1165 1118,1180 1122,1208 1126,1212 1130,1220 1134,1228 1138,1238 1142,1242 1146,1240 1150,1237 1154,1237 1158,1238 1162,1238 1166,1240 1170,1242 1174,1238 1178,1235 1182,1232 1186,1228 1190,1220 1194,1205 1198,1190 1202,1180 1206,1172 1210,1162 1214,1150 1218,1135 1222,1120 1226,1110 1230,1108 1234,1105 1238,1100 1242,1098 1246,1093 1250,1100 1254,1110 1258,1120 1262,1125 1266,1140 1270,1160 1274,1180 1278,1200 1282,1208 1286,1212 1290,1215 1294,1220 1298,1228 1302,1235 1306,1245 1310,1245 1314,1246 1318,1247 1322,1248 1326,1248 1328,1240 1332,1190 1336,1120 1340,1090 1344,1070 1348,1050 1352,1000 1356,950 1360,890 1364,855 1368,835 1372,820 1376,795 1380,790 1384,780 1388,760 1392,752 1396,745 1400,740 1404,720 1408,700 1412,680 1416,665 1420,655 1424,650 1428,645 1432,630 1436,605 1440,590 1444,585 1448,583 1452,580 1456,575 1460,572 1464,568 1468,575 1472,580 1476,585 1480,595 1484,605 1488,615 1492,620 1496,615 1500,610 1504,610 1508,605 1512,590 1516,580 1520,577 1524,577 1528,577 1532,575 1536,580 1540,585 1550,600"/>
</g></g>
<rect class="sp" x="245" y="4897" width="1999" height="1398"/>
<path class="tk" d="M231 4982H245M231 5140H245M231 5299H245M231 5458H245M231 5617H245M231 5776H245M231 5935H245M231 6095H245M231 6253H245M302.8 6295v15M640 6295v15M971.5 6295v15M1303 6295v15M1623 6295v15M1953 6295v15"/>
<g class="t yl"><text x="214" y="4982">0.20</text><text x="214" y="5140">0.15</text><text x="214" y="5299">0.10</text><text x="214" y="5458">0.05</text><text x="214" y="5617">0.00</text><text x="214" y="5776">−0.05</text><text x="214" y="5935">−0.10</text><text x="214" y="6095">−0.15</text><text x="214" y="6253">−0.20</text></g>
<g class="t xl">
<text transform="translate(302.8,6407) rotate(-45)">2024-07</text>
<text transform="translate(640,6407) rotate(-45)">2024-09</text>
<text transform="translate(971.5,6407) rotate(-45)">2024-11</text>
<text transform="translate(1303,6407) rotate(-45)">2025-01</text>
<text transform="translate(1623,6407) rotate(-45)">2025-03</text>
<text transform="translate(1953,6407) rotate(-45)">2025-05</text>
</g>
<text class="t" text-anchor="middle" dominant-baseline="central" transform="translate(50,5598) rotate(-90)">Value</text>
<text class="ti" x="1244" y="4856">MACD</text>
<rect class="lg" x="267" y="4918" width="277" height="138" rx="9"/>
<path d="M281 4954H369" stroke="#ff8c00" stroke-width="6.25"/>
<path d="M281 5018H369" stroke="#00ff7f" stroke-width="6.25"/>
<g class="t" dominant-baseline="central"><text x="402" y="4954">MACD</text><text x="402" y="5018">Signal</text></g>

<!-- ================= VWAP ================= -->
<rect x="2443" y="4897" width="1997" height="1398" fill="#1b1b1b"/>
<g clip-path="url(#c5)"><g transform="translate(2250,4750) scale(1.4158,1.1205)">
<polygon fill="#ffffff" fill-opacity="0.07" points="150,552 258,552 262,540 268,532 276,528 282,526 290,522 298,524 306,527 314,533 322,537 330,536 338,533 346,531 354,532 362,534 370,540 378,550 386,563 392,580 398,595 405,606 412,609 418,612 424,620 430,630 436,634 442,640 450,648 456,660 462,664 468,667 474,672 480,675 486,677 492,680 498,684 504,690 510,692 516,694 522,697 530,704 536,706 544,707 552,708 560,711 566,713 572,715 580,716 586,720 592,722 600,725 608,728 614,730 620,733 628,735 634,737 640,737 650,738 660,737 670,728 678,722 684,712 688,660 692,620 696,590 702,585 710,570 718,555 724,540 730,528 738,520 746,513 752,510 760,507 768,506 774,510 780,520 788,528 796,540 802,544 808,548 814,546 820,540 826,532 834,530 842,528 852,527 862,528 872,530 880,535 888,542 900,545 920,546 940,546 960,548 980,550 1000,555 1020,558 1040,561 1060,562 1080,563 1100,565 1120,567 1140,568 1160,570 1180,576 1200,578 1220,580 1240,582 1260,583 1280,585 1300,586 1320,586 1340,588 1360,590 1380,595 1400,610 1420,615 1440,620 1460,625 1480,628 1500,632 1520,635 1535,637 1535,1400 150,1400"/>
<polygon fill="#1b1b1b" points="150,712 258,712 262,700 268,690 276,688 282,686 288,682 294,672 300,660 306,656 312,652 318,645 324,638 330,636 336,640 340,648 346,660 350,672 356,680 362,688 370,698 378,706 386,710 394,712 400,714 408,713 416,714 424,716 430,718 436,720 444,722 452,723 460,724 468,726 476,728 484,731 494,734 502,737 512,738 522,738 532,741 540,742 548,744 556,746 564,748 572,750 580,750 590,749 600,748 610,748 620,749 630,748 640,748 650,748 660,748 670,750 680,752 686,760 690,790 694,810 700,820 708,824 716,824 722,816 728,808 734,804 742,790 748,778 754,770 760,762 766,758 770,740 774,720 778,700 782,688 788,670 794,650 798,615 802,612 810,614 820,615 830,614 840,610 850,606 858,602 866,594 874,590 882,584 888,575 896,566 904,562 910,562 920,560 940,562 960,563 980,566 1000,569 1020,572 1040,574 1060,577 1080,580 1100,585 1120,589 1140,590 1160,591 1180,592 1200,594 1220,597 1240,600 1260,602 1290,604 1304,606 1312,618 1330,622 1350,626 1370,630 1390,636 1410,638 1430,642 1450,644 1470,647 1490,649 1510,652 1535,655 1535,1400 150,1400"/>
</g></g>
<g class="g">
<path d="M2500.6 4897V6295M2836 4897V6295M3167 4897V6295M3498.7 4897V6295M3818.7 4897V6295M4150 4897V6295"/>
<path d="M2443 4913.6H4440M2443 5155.6H4440M2443 5397.6H4440M2443 5639.7H4440M2443 5882.8H4440M2443 6124.9H4440"/>
</g>
<g clip-path="url(#c5)">
<use xlink:href="#cp" href="#cp" transform="translate(2250,4750) scale(1.4158,1.1205) translate(177,146) scale(0.958,0.8827) translate(-128,-71)" stroke="#0f900f" stroke-width="6.25"/>
<g transform="translate(2250,4750) scale(1.4158,1.1205)">
<polyline class="ns" stroke="#a8362c" stroke-opacity="0.85" stroke-width="4.2" points="150,552 258,552 262,540 268,532 276,528 282,526 290,522 298,524 306,527 314,533 322,537 330,536 338,533 346,531 354,532 362,534 370,540 378,550 386,563 392,580 398,595 405,606 412,609 418,612 424,620 430,630 436,634 442,640 450,648 456,660 462,664 468,667 474,672 480,675 486,677 492,680 498,684 504,690 510,692 516,694 522,697 530,704 536,706 544,707 552,708 560,711 566,713 572,715 580,716 586,720 592,722 600,725 608,728 614,730 620,733 628,735 634,737 640,737 650,738 660,737 670,728 678,722 684,712 688,660 692,620 696,590 702,585 710,570 718,555 724,540 730,528 738,520 746,513 752,510 760,507 768,506 774,510 780,520 788,528 796,540 802,544 808,548 814,546 820,540 826,532 834,530 842,528 852,527 862,528 872,530 880,535 888,542 900,545 920,546 940,546 960,548 980,550 1000,555 1020,558 1040,561 1060,562 1080,563 1100,565 1120,567 1140,568 1160,570 1180,576 1200,578 1220,580 1240,582 1260,583 1280,585 1300,586 1320,586 1340,588 1360,590 1380,595 1400,610 1420,615 1440,620 1460,625 1480,628 1500,632 1520,635 1535,637"/>
<polyline class="ns" stroke="#2f8f2f" stroke-opacity="0.9" stroke-width="4.2" points="150,712 258,712 262,700 268,690 276,688 282,686 288,682 294,672 300,660 306,656 312,652 318,645 324,638 330,636 336,640 340,648 346,660 350,672 356,680 362,688 370,698 378,706 386,710 394,712 400,714 408,713 416,714 424,716 430,718 436,720 444,722 452,723 460,724 468,726 476,728 484,731 494,734 502,737 512,738 522,738 532,741 540,742 548,744 556,746 564,748 572,750 580,750 590,749 600,748 610,748 620,749 630,748 640,748 650,748 660,748 670,750 680,752 686,760 690,790 694,810 700,820 708,824 716,824 722,816 728,808 734,804 742,790 748,778 754,770 760,762 766,758 770,740 774,720 778,700 782,688 788,670 794,650 798,615 802,612 810,614 820,615 830,614 840,610 850,606 858,602 866,594 874,590 882,584 888,575 896,566 904,562 910,562 920,560 940,562 960,563 980,566 1000,569 1020,572 1040,574 1060,577 1080,580 1100,585 1120,589 1140,590 1160,591 1180,592 1200,594 1220,597 1240,600 1260,602 1290,604 1304,606 1312,618 1330,622 1350,626 1370,630 1390,636 1410,638 1430,642 1450,644 1470,647 1490,649 1510,652 1535,655"/>
<polyline class="ns" stroke="#ff00ff" stroke-width="8.3" points="150,708 153,690 157,665 161,650 165,655 170,648 175,645 180,642 185,642 190,648 196,648 202,648 210,648 216,645 220,635 224,620 228,605 232,590 236,575 240,570 246,566 252,563 258,562 262,562 266,565 270,572 276,572 282,573 288,575 292,580 296,590 300,600 304,608 310,620 316,630 320,635 326,638 332,640 338,645 344,650 348,660 352,665 358,667 364,670 368,672 372,676 376,685 382,686 390,688 398,690 406,692 412,695 418,697 424,700 430,706 436,710 444,712 452,714 460,717 468,718 476,720 484,721 494,722 502,725 510,728 518,730 526,732 534,735 542,737 550,738 556,740 562,742 570,744 578,745 586,743 594,742 602,742 612,741 620,740 628,738 634,735 642,735 650,734 656,733 662,730 670,726 678,722 684,715 688,660 690,620 692,590 696,588 702,590 710,588 716,589 722,590 730,592 740,594 750,594 760,595 770,594 774,585 778,570 782,562 788,558 795,555 802,553 810,549 818,548 826,548 832,550 836,552 846,552 860,553 880,555 900,557 920,560 940,562 960,563 980,564 1000,567 1020,570 1040,573 1060,576 1080,578 1100,583 1120,587 1140,588 1160,589 1180,590 1200,592 1220,595 1240,598 1260,600 1290,603 1304,605 1310,615 1320,617 1340,620 1360,622 1370,626 1390,630 1410,634 1430,638 1450,640 1470,643 1490,645 1510,648 1535,652"/>
</g>
</g>
<rect class="sp" x="2443" y="4897" width="1997" height="1398"/>
<path class="tk" d="M2429 4913.6H2443M2429 5155.6H2443M2429 5397.6H2443M2429 5639.7H2443M2429 5882.8H2443M2429 6124.9H2443M2500.6 6295v15M2836 6295v15M3167 6295v15M3498.7 6295v15M3818.7 6295v15M4150 6295v15"/>
<g class="t yl"><text x="2412" y="4913.6">4.0</text><text x="2412" y="5155.6">3.5</text><text x="2412" y="5397.6">3.0</text><text x="2412" y="5639.7">2.5</text><text x="2412" y="5882.8">2.0</text><text x="2412" y="6124.9">1.5</text></g>
<g class="t xl">
<text transform="translate(2500.6,6407) rotate(-45)">2024-07</text>
<text transform="translate(2836,6407) rotate(-45)">2024-09</text>
<text transform="translate(3167,6407) rotate(-45)">2024-11</text>
<text transform="translate(3498.7,6407) rotate(-45)">2025-01</text>
<text transform="translate(3818.7,6407) rotate(-45)">2025-03</text>
<text transform="translate(4150,6407) rotate(-45)">2025-05</text>
</g>
<text class="t" text-anchor="middle" dominant-baseline="central" transform="translate(2307,5598) rotate(-90)">Price ($)</text>
<text class="ti" x="3442" y="4856">VWAP with Bollinger Bands</text>
<rect class="lg" x="2464" y="4919" width="480" height="262" rx="9"/>
<path d="M2477 4955H2566" stroke="#0f900f" stroke-width="6.25"/>
<path d="M2477 5017H2566" stroke="#ff00ff" stroke-width="8.3"/>
<path d="M2477 5079H2566" stroke="#a8362c" stroke-width="4.2"/>
<path d="M2477 5143H2566" stroke="#2f8f2f" stroke-width="4.2"/>
<g class="t" dominant-baseline="central"><text x="2598" y="4955">Close Price</text><text x="2598" y="5017">VWAP</text><text x="2598" y="5079">VWAP BB Upper</text><text x="2598" y="5143">VWAP BB Lower</text></g>
</svg>
</body></html>
